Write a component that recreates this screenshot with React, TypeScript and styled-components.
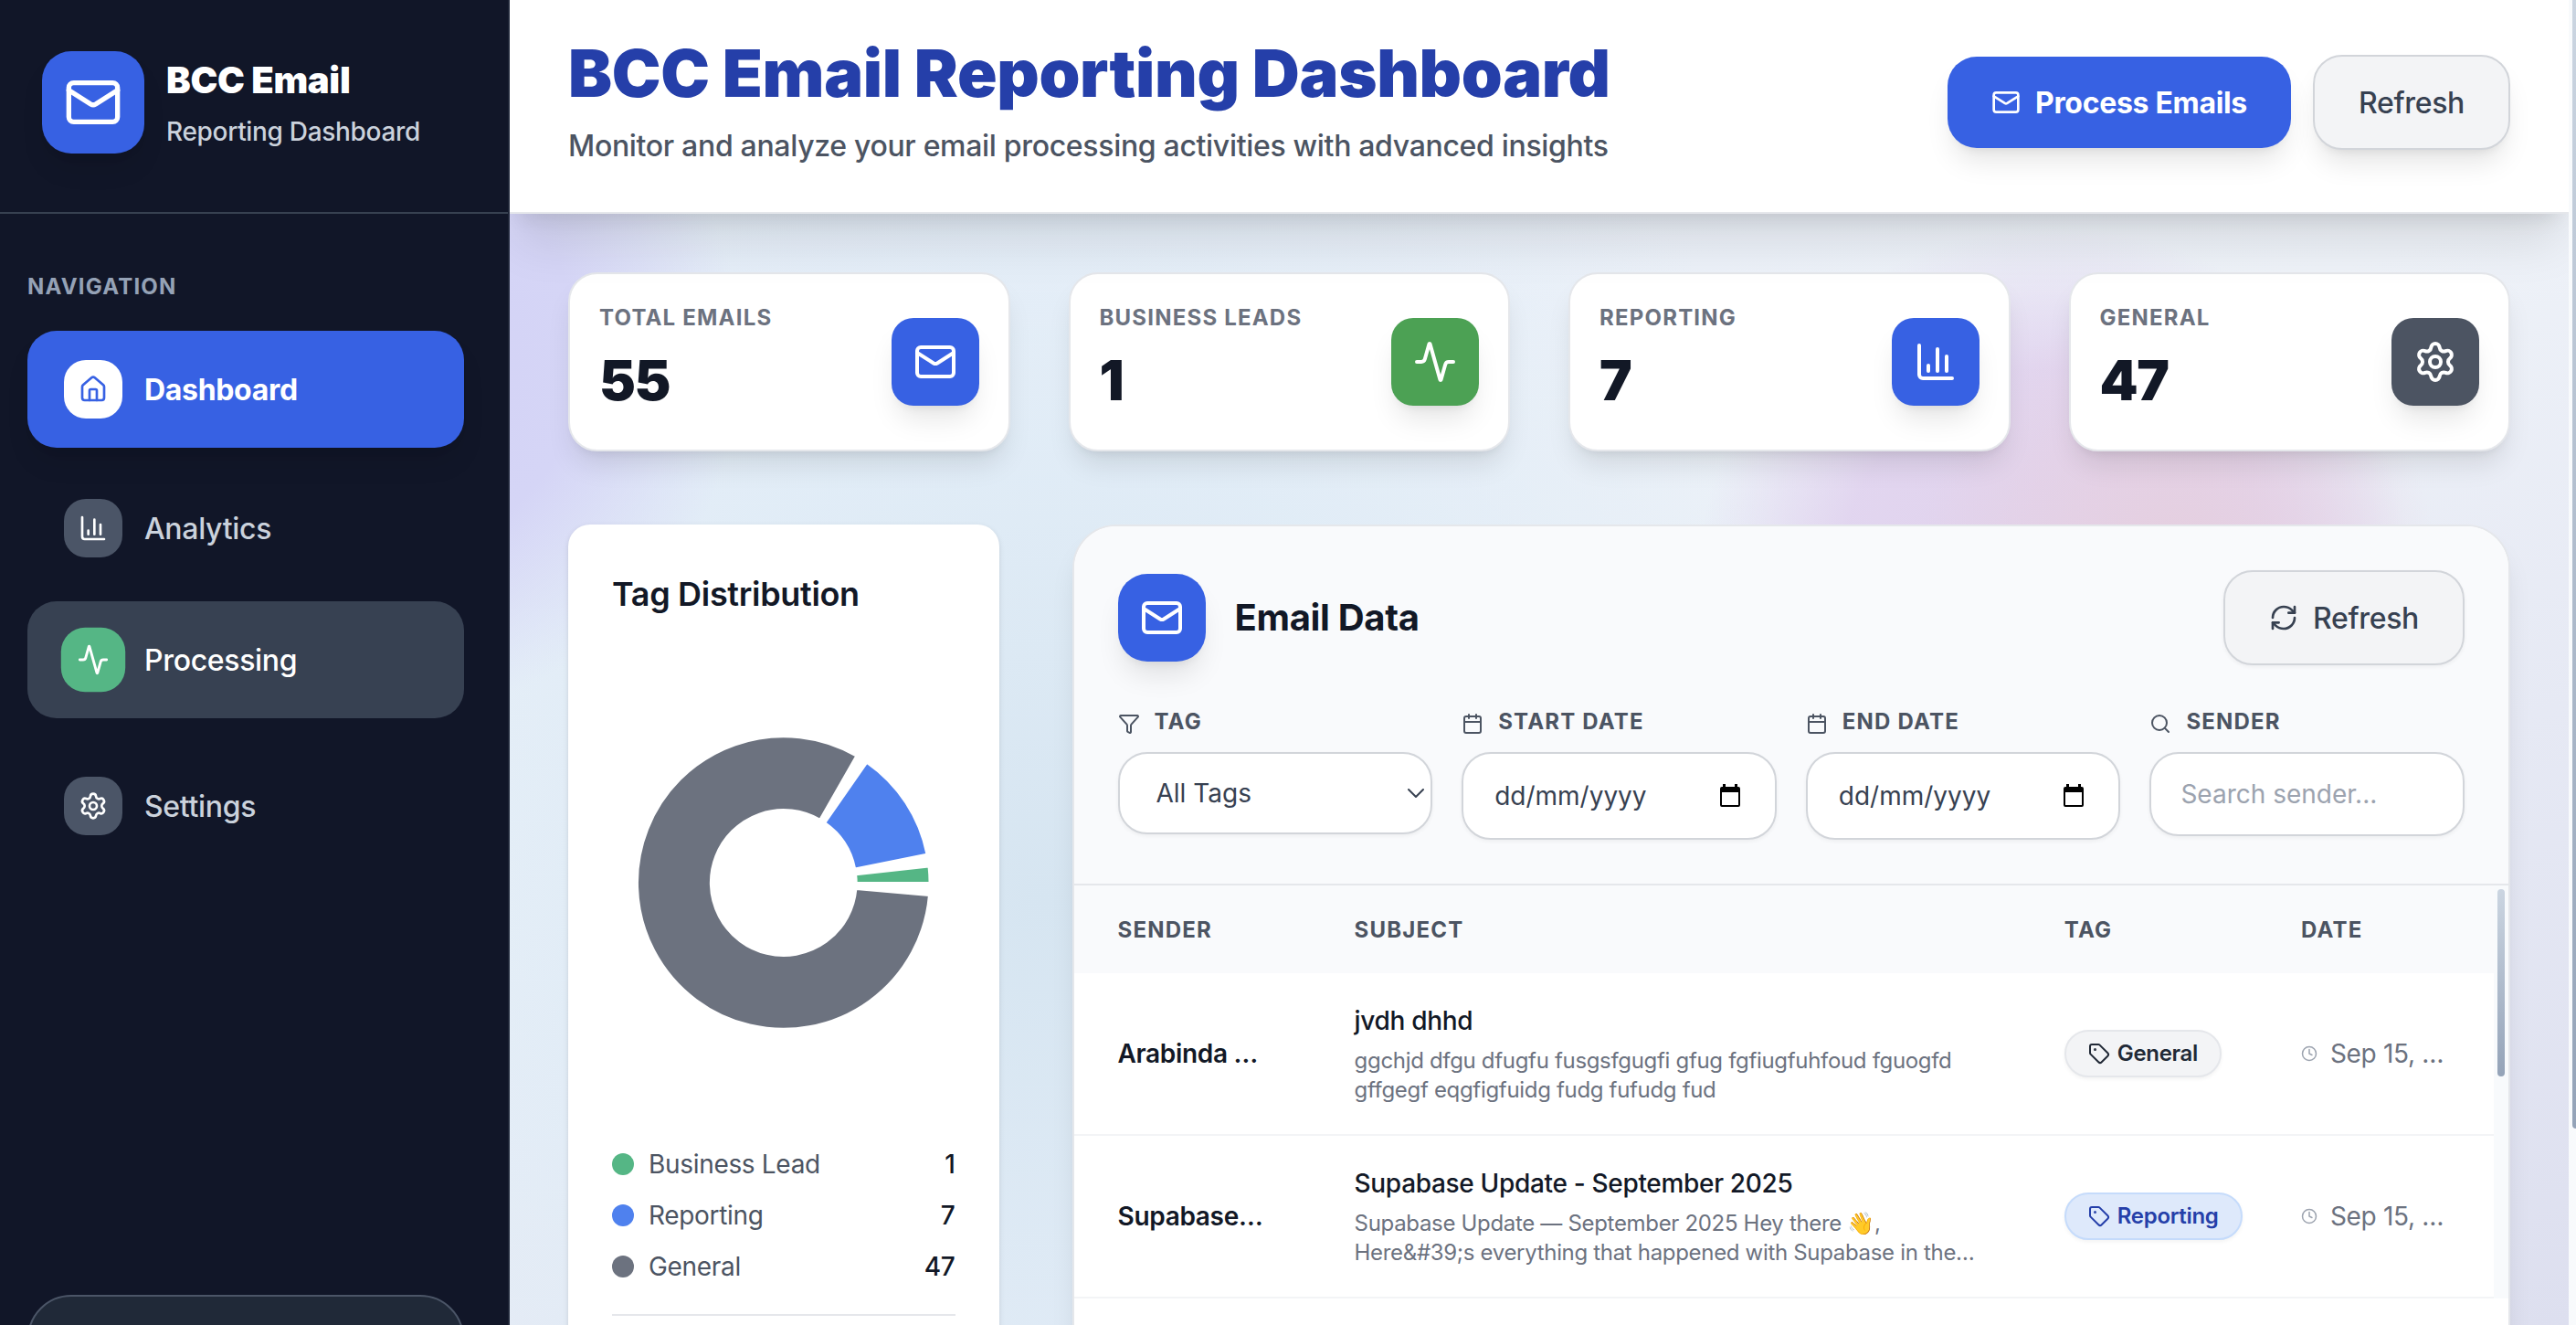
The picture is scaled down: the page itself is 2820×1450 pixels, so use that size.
import React from "react";
import styled, { createGlobalStyle, css } from "styled-components";
import {
  Activity,
  Calendar,
  ChartColumn,
  ChevronDown,
  Clock,
  Funnel,
  House,
  Mail,
  RefreshCw,
  Search,
  Settings,
  Tag,
} from "lucide-react";

const c = {
  blue: "#3761e3",
  title: "#253fa9",
  ink: "#121826",
  body: "#4c5462",
  muted: "#6c727f",
  slate: "#374151",
  line: "#e5e7eb",
  control: "#d2d5da",
  panel: "#f9fafc",
  night: "#111628",
  green: "#4ca154",
  mint: "#55b685",
  sky: "#4f81ee",
};

const GlobalStyle = createGlobalStyle`
  *, *::before, *::after { box-sizing: border-box; }
  html, body { margin: 0; padding: 0; height: 100%; overflow: hidden; }
  body {
    font-family: Inter, "Liberation Sans", sans-serif;
    font-size: 32px;
    letter-spacing: -0.01em;
    color: ${c.ink};
  }
  h1, h2, p, ul, dl, dd { margin: 0; padding: 0; }
  ul { list-style: none; }
  button, input, select {
    font: inherit;
    color: inherit;
    margin: 0;
  }
  button { letter-spacing: inherit; }
  svg { flex-shrink: 0; display: block; }
`;

const softShadow = "0 20px 30px -6px rgba(0,0,0,.1), 0 8px 12px -8px rgba(0,0,0,.1)";
const faintShadow = "0 2px 4px rgba(0,0,0,.05)";

const Shell = styled.div`
  display: grid;
  grid-template-columns: 558px minmax(0, 1fr) 8px;
  height: 100vh;
  overflow: hidden;
  font-size: 28px;
`;

/* Sidebar */

const Sidebar = styled.aside`
  display: flex;
  flex-direction: column;
  height: 100vh;
  overflow: hidden;
  background: ${c.night};
  border-right: 2px solid #1f2638;
`;

const Brand = styled.div`
  display: flex;
  align-items: center;
  gap: 24px;
  padding: 56px 46px 64px;
  border-bottom: 2px solid #374151;
`;

const Tile = styled.span<{ $size: number; $radius: number; $color: string; $shadow?: boolean }>`
  display: flex;
  flex: none;
  align-items: center;
  justify-content: center;
  width: ${(p) => p.$size}px;
  height: ${(p) => p.$size}px;
  border-radius: ${(p) => p.$radius}px;
  background: ${(p) => p.$color};
  color: #fff;
  box-shadow: ${(p) => (p.$shadow ? softShadow : "none")};
`;

const BrandName = styled.p`
  font-size: 40px;
  line-height: 56px;
  font-weight: 900;
  color: #fff;
`;

const BrandSub = styled.p`
  margin-top: 8px;
  font-size: 28px;
  line-height: 40px;
  font-weight: 500;
  color: #cbd2dc;
`;

const Nav = styled.nav`
  flex: 1;
  padding: 64px 48px 0 30px;
`;

const NavTitle = styled.p`
  font-size: 24px;
  line-height: 32px;
  font-weight: 700;
  letter-spacing: 0.05em;
  color: #95a2b6;
`;

const NavList = styled.ul`
  display: grid;
  gap: 24px;
  margin-top: 32px;
`;

const NavIcon = styled.span`
  display: flex;
  align-items: center;
  justify-content: center;
  width: 64px;
  height: 64px;
  border-radius: 24px;
  background: #4b5567;
  color: #fff;
`;

const NavLink = styled.a<{ $state?: "active" | "hover" }>`
  display: flex;
  align-items: center;
  gap: 24px;
  height: 128px;
  padding: 0 40px;
  border-radius: 32px;
  font-size: 32px;
  font-weight: 500;
  color: #cbd2dc;
  text-decoration: none;
  ${(p) =>
    p.$state === "active" &&
    css`
      background: ${c.blue};
      color: #fff;
      font-weight: 700;
      box-shadow: ${softShadow};
      ${NavIcon} {
        background: #fff;
        color: ${c.blue};
      }
    `}
  ${(p) =>
    p.$state === "hover" &&
    css`
      background: #374152;
      color: #fff;
      transform: translateY(-8px);
      ${NavIcon} {
        background: ${c.mint};
        transform: scale(1.1);
      }
    `}
`;

const SidebarFoot = styled.div`
  flex: 0 0 33px;
  min-height: 0;
  padding: 0 48px 0 30px;
`;

const FootCard = styled.div`
  height: 160px;
  border: 2px solid #4b5567;
  border-radius: 48px;
  background: #202938;
`;

/* Main column */

const Main = styled.main`
  min-width: 0;
  height: 100vh;
  overflow: hidden;
  background:
    radial-gradient(circle 390px at -6% 27%, #d3d2f6 0, #d5d5f6 55%, rgba(216, 217, 247, 0) 100%),
    radial-gradient(circle 280px at 81% 42%, #e5cfdf 0, rgba(229, 208, 226, 0.7) 45%, rgba(229, 210, 232, 0) 100%),
    radial-gradient(circle 390px at 75% 44%, #e1d2ec 0, rgba(225, 212, 239, 0.95) 60%, rgba(226, 217, 243, 0) 100%),
    radial-gradient(circle 1000px at 26% 68%, #d6e5f1 0, rgba(222, 235, 246, 0.8) 50%, rgba(226, 237, 246, 0) 100%),
    linear-gradient(160deg, #e6eefa 0%, #eef2f8 45%, #e6e9f4 70%, #dddfef 100%);
`;

const Header = styled.header`
  position: relative;
  display: flex;
  align-items: center;
  justify-content: space-between;
  padding: 40px 64px 48px;
  background: #fff;
  border-bottom: 2px solid ${c.line};
  box-shadow: 0 40px 50px -10px rgba(0, 0, 0, 0.1), 0 16px 20px -12px rgba(0, 0, 0, 0.1);
`;

const PageTitle = styled.h1`
  font-size: 72px;
  line-height: 80px;
  font-weight: 900;
  color: ${c.title};
`;

const PageSub = styled.p`
  margin-top: 16px;
  font-size: 32px;
  line-height: 48px;
  font-weight: 500;
  color: ${c.body};
`;

const Actions = styled.div`
  display: flex;
  align-items: center;
  gap: 24px;
`;

const Button = styled.button<{ $primary?: boolean; $flat?: boolean }>`
  display: flex;
  align-items: center;
  gap: 16px;
  height: ${(p) => (p.$primary ? 100 : 104)}px;
  padding: 0 48px;
  border: ${(p) => (p.$primary ? "0" : `2px solid ${c.control}`)};
  border-radius: 32px;
  background: ${(p) => (p.$primary ? c.blue : "#f3f4f6")};
  color: ${(p) => (p.$primary ? "#fff" : c.slate)};
  font-size: 32px;
  font-weight: ${(p) => (p.$primary ? 700 : 500)};
  box-shadow: ${(p) => (p.$flat ? faintShadow : softShadow)};
`;

const Content = styled.div`
  display: grid;
  gap: 80px;
  padding: 64px;
`;

const Stats = styled.section`
  display: grid;
  grid-template-columns: repeat(4, minmax(0, 1fr));
  gap: 64px;
`;

const StatCard = styled.article`
  display: flex;
  align-items: center;
  justify-content: space-between;
  padding: 32px;
  background: #fff;
  border: 2px solid ${c.line};
  border-radius: 32px;
  box-shadow: ${softShadow};
`;

const StatLabel = styled.p`
  font-size: 24px;
  line-height: 32px;
  font-weight: 700;
  letter-spacing: 0.05em;
  color: ${c.muted};
`;

const StatValue = styled.p`
  margin-top: 8px;
  font-size: 60px;
  line-height: 88px;
  font-weight: 900;
  letter-spacing: -0.025em;
`;

const Panels = styled.div`
  display: grid;
  grid-template-columns: repeat(4, minmax(0, 1fr));
  gap: 80px;
`;

/* Tag distribution */

const ChartCard = styled.section`
  min-height: 1000px;
  padding: 48px;
  background: #fff;
  border-radius: 24px;
  box-shadow: 0 2px 6px rgba(0, 0, 0, 0.1), 0 2px 4px -2px rgba(0, 0, 0, 0.1);
`;

const CardTitle = styled.h2`
  font-size: 36px;
  line-height: 56px;
  font-weight: 600;
`;

const Donut = styled.svg`
  width: 100%;
  height: 512px;
  margin: 32px 0;
`;

const Legend = styled.ul`
  display: grid;
  gap: 16px;
  padding-bottom: 32px;
  border-bottom: 2px solid ${c.line};
`;

const LegendRow = styled.li`
  display: flex;
  align-items: center;
  gap: 16px;
  line-height: 40px;
  color: ${c.body};
`;

const Dot = styled.span<{ $color: string }>`
  width: 24px;
  height: 24px;
  border-radius: 50%;
  background: ${(p) => p.$color};
`;

const LegendValue = styled.span`
  margin-left: auto;
  font-weight: 500;
  color: ${c.ink};
`;

/* Email data */

const EmailCard = styled.section`
  grid-column: span 3;
  overflow: hidden;
  background: #fff;
  border: 2px solid ${c.line};
  border-radius: 48px;
  box-shadow: ${softShadow};
`;

const EmailHead = styled.div`
  padding: 48px;
  background: ${c.panel};
  border-bottom: 2px solid ${c.line};
`;

const EmailBar = styled.div`
  display: flex;
  align-items: center;
  justify-content: space-between;
`;

const EmailTitle = styled.div`
  display: flex;
  align-items: center;
  gap: 32px;
  h2 {
    font-size: 40px;
    line-height: 56px;
    font-weight: 700;
  }
`;

const Filters = styled.form`
  display: grid;
  grid-template-columns: repeat(4, minmax(0, 1fr));
  align-items: start;
  gap: 32px;
  margin-top: 48px;
`;

const Label = styled.label`
  display: flex;
  align-items: flex-end;
  gap: 16px;
  margin-bottom: 19px;
  font-size: 24px;
  line-height: 28px;
  font-weight: 700;
  letter-spacing: 0.05em;
  color: ${c.body};
`;

const Control = styled.div<{ $height: number }>`
  display: flex;
  align-items: center;
  position: relative;
  height: ${(p) => p.$height}px;
  overflow: hidden;
  background: #fff;
  border: 2px solid ${c.control};
  border-radius: 32px;
  box-shadow: ${faintShadow};
  color: ${c.slate};
`;

const field = css`
  width: 100%;
  min-width: 0;
  height: 100%;
  border: 0;
  outline: 0;
  background: transparent;
  font-size: 28px;
`;

const Select = styled.select`
  ${field}
  appearance: none;
  padding: 0 40px;
`;

const SelectArrow = styled(ChevronDown)`
  position: absolute;
  right: 0;
  pointer-events: none;
`;

const TextInput = styled.input`
  ${field}
  padding: 0 32px;
  &::placeholder {
    color: #9ca3af;
    opacity: 1;
  }
`;

const DateInput = styled(TextInput)`
  padding: 0 0 0 34px;
  &::placeholder {
    color: ${c.slate};
  }
`;

const PickerButton = styled.button`
  flex: none;
  padding: 0;
  margin-right: 38px;
  border: 0;
  background: none;
  color: #000;
`;

const TableArea = styled.div`
  display: grid;
  grid-template-columns: minmax(0, 1fr) 16px;
`;

const Table = styled.table`
  width: 100%;
  table-layout: fixed;
  border-collapse: separate;
  border-spacing: 0;
  text-align: left;
`;

const Th = styled.th<{ $wide?: boolean }>`
  width: ${(p) => (p.$wide ? "50%" : "auto")};
  height: 96px;
  padding: 0 48px;
  background: ${c.panel};
  font-size: 24px;
  font-weight: 700;
  letter-spacing: 0.05em;
  color: ${c.body};
`;

const Td = styled.td`
  height: 178px;
  padding: 32px 48px;
  border-bottom: 2px solid #f3f4f6;
  vertical-align: middle;
  white-space: nowrap;
`;

const Sender = styled.p`
  font-weight: 600;
  line-height: 40px;
`;

const Subject = styled.p`
  font-weight: 500;
  line-height: 40px;
`;

const Preview = styled.p`
  margin-top: 8px;
  font-size: 24px;
  line-height: 32px;
  color: ${c.muted};
  white-space: pre;
`;

const Badge = styled.span<{ $tone: "gray" | "blue" }>`
  display: inline-flex;
  align-items: center;
  gap: 8px;
  padding: 8px 24px;
  border: 2px solid ${(p) => (p.$tone === "blue" ? "#c5dbfb" : c.line)};
  border-radius: 26px;
  background: ${(p) => (p.$tone === "blue" ? "#dee9fb" : "#f3f4f6")};
  color: ${(p) => (p.$tone === "blue" ? c.title : "#212936")};
  font-size: 24px;
  line-height: 32px;
  font-weight: 600;
  vertical-align: middle;
  box-shadow: ${faintShadow};
`;

const When = styled.span`
  display: flex;
  align-items: center;
  gap: 14px;
  color: ${c.muted};
  svg {
    color: #9ca3af;
  }
`;

const Track = styled.div`
  padding: 4px;
  background: #f8fafc;
`;

const Thumb = styled.div`
  width: 8px;
  height: 205px;
  border-radius: 4px;
  background: linear-gradient(#cbd5e1, #94a3b8);
`;

const PageTrack = styled.div`
  padding-left: 4px;
  overflow: hidden;
  background: #f8fafc;
`;

const PageThumb = styled.div`
  width: 8px;
  height: 85.2%;
  border-radius: 0 0 4px 4px;
  background: linear-gradient(#cbd5e1, #94a3b8);
`;

const navItems = [
  { label: "Dashboard", Icon: House, state: "active" as const },
  { label: "Analytics", Icon: ChartColumn },
  { label: "Processing", Icon: Activity, state: "hover" as const },
  { label: "Settings", Icon: Settings },
];

const stats = [
  { label: "TOTAL EMAILS", value: 55, Icon: Mail, color: c.blue },
  { label: "BUSINESS LEADS", value: 1, Icon: Activity, color: c.green },
  { label: "REPORTING", value: 7, Icon: ChartColumn, color: c.blue },
  { label: "GENERAL", value: 47, Icon: Settings, color: c.body },
];

const tags = [
  { name: "Business Lead", value: 1, color: c.mint },
  { name: "Reporting", value: 7, color: c.sky },
  { name: "General", value: 47, color: c.muted },
];

const emails = [
  {
    sender: "Arabinda …",
    subject: "jvdh dhhd",
    preview: "ggchjd dfgu dfugfu fusgsfgugfi gfug fgfiugfuhfoud fguogfd\ngffgegf eqgfigfuidg fudg fufudg fud",
    tag: "General",
    tone: "gray" as const,
    date: "Sep 15, …",
  },
  {
    sender: "Supabase…",
    subject: "Supabase Update - September 2025",
    preview: "Supabase Update — September 2025 Hey there 👋,\nHere&#39;s everything that happened with Supabase in the…",
    tag: "Reporting",
    tone: "blue" as const,
    date: "Sep 15, …",
  },
];

/* Ring sector between two angles, counter-clockwise from three o'clock. */
function sector(from: number, to: number, inner: number, outer: number) {
  const pt = (r: number, deg: number) => {
    const a = (-deg * Math.PI) / 180;
    return `${(r * Math.cos(a)).toFixed(2)} ${(r * Math.sin(a)).toFixed(2)}`;
  };
  const large = to - from > 180 ? 1 : 0;
  return `M${pt(outer, from)}A${outer} ${outer} 0 ${large} 0 ${pt(outer, to)}L${pt(inner, to)}A${inner} ${inner} 0 ${large} 1 ${pt(inner, from)}Z`;
}

function TagDonut() {
  const total = tags.reduce((sum, t) => sum + t.value, 0);
  const gap = 5;
  const sweep = 360 - gap * tags.length;
  let start = 0;
  return (
    <Donut viewBox="-188 -256 376 512" role="img" aria-label="Tag distribution">
      {tags.map((t) => {
        const end = start + (t.value / total) * sweep;
        const d = sector(start, end, 80, 160);
        start = end + gap;
        return <path key={t.name} d={d} fill={t.color} stroke="#fff" strokeWidth={2} />;
      })}
    </Donut>
  );
}

function PickerIcon() {
  return (
    <svg width="22" height="26" viewBox="0 0 22 26" fill="currentColor">
      <path
        fillRule="evenodd"
        d="M3 0h3v3h10V0h3v3h1a2 2 0 0 1 2 2v18a2 2 0 0 1-2 2H2a2 2 0 0 1-2-2V5a2 2 0 0 1 2-2h1zM2 9v14h18V9z"
      />
    </svg>
  );
}

function DateFilter({ id, label }: { id: string; label: string }) {
  return (
    <div>
      <Label htmlFor={id}>
        <Calendar size={24} />
        {label}
      </Label>
      <Control $height={96}>
        <DateInput id={id} type="text" placeholder="dd/mm/yyyy" />
        <PickerButton type="button" aria-label={`Pick ${label.toLowerCase()}`}>
          <PickerIcon />
        </PickerButton>
      </Control>
    </div>
  );
}

export default function App() {
  return (
    <>
      <GlobalStyle />
      <Shell>
        <Sidebar>
          <Brand>
            <Tile $size={112} $radius={32} $color={c.blue} $shadow>
              <Mail size={64} />
            </Tile>
            <div>
              <BrandName>BCC Email</BrandName>
              <BrandSub>Reporting Dashboard</BrandSub>
            </div>
          </Brand>
          <Nav>
            <NavTitle>NAVIGATION</NavTitle>
            <NavList>
              {navItems.map(({ label, Icon, state }) => (
                <li key={label}>
                  <NavLink href="#" $state={state}>
                    <NavIcon>
                      <Icon size={32} />
                    </NavIcon>
                    {label}
                  </NavLink>
                </li>
              ))}
            </NavList>
          </Nav>
          <SidebarFoot>
            <FootCard />
          </SidebarFoot>
        </Sidebar>

        <Main>
          <Header>
            <div>
              <PageTitle>BCC Email Reporting Dashboard</PageTitle>
              <PageSub>Monitor and analyze your email processing activities with advanced insights</PageSub>
            </div>
            <Actions>
              <Button type="button" $primary>
                <Mail size={32} />
                Process Emails
              </Button>
              <Button type="button">Refresh</Button>
            </Actions>
          </Header>

          <Content>
            <Stats>
              {stats.map(({ label, value, Icon, color }) => (
                <StatCard key={label}>
                  <div>
                    <StatLabel>{label}</StatLabel>
                    <StatValue>{value}</StatValue>
                  </div>
                  <Tile $size={96} $radius={24} $color={color} $shadow>
                    <Icon size={48} />
                  </Tile>
                </StatCard>
              ))}
            </Stats>

            <Panels>
              <ChartCard>
                <CardTitle>Tag Distribution</CardTitle>
                <TagDonut />
                <Legend>
                  {tags.map((t) => (
                    <LegendRow key={t.name}>
                      <Dot $color={t.color} />
                      {t.name}
                      <LegendValue>{t.value}</LegendValue>
                    </LegendRow>
                  ))}
                </Legend>
              </ChartCard>

              <EmailCard>
                <EmailHead>
                  <EmailBar>
                    <EmailTitle>
                      <Tile $size={96} $radius={32} $color={c.blue} $shadow>
                        <Mail size={48} />
                      </Tile>
                      <h2>Email Data</h2>
                    </EmailTitle>
                    <Button type="button" $flat>
                      <RefreshCw size={32} />
                      Refresh
                    </Button>
                  </EmailBar>
                  <Filters>
                    <div>
                      <Label htmlFor="tag">
                        <Funnel size={24} />
                        TAG
                      </Label>
                      <Control $height={90}>
                        <Select id="tag" defaultValue="all">
                          <option value="all">All Tags</option>
                        </Select>
                        <SelectArrow size={32} strokeWidth={1.5} />
                      </Control>
                    </div>
                    <DateFilter id="start" label="START DATE" />
                    <DateFilter id="end" label="END DATE" />
                    <div>
                      <Label htmlFor="sender">
                        <Search size={24} />
                        SENDER
                      </Label>
                      <Control $height={92}>
                        <TextInput id="sender" type="text" placeholder="Search sender..." />
                      </Control>
                    </div>
                  </Filters>
                </EmailHead>
                <TableArea>
                  <Table>
                    <thead>
                      <tr>
                        <Th>SENDER</Th>
                        <Th $wide>SUBJECT</Th>
                        <Th>TAG</Th>
                        <Th>DATE</Th>
                      </tr>
                    </thead>
                    <tbody>
                      {emails.map((m) => (
                        <tr key={m.subject}>
                          <Td>
                            <Sender>{m.sender}</Sender>
                          </Td>
                          <Td>
                            <Subject>{m.subject}</Subject>
                            <Preview>{m.preview}</Preview>
                          </Td>
                          <Td>
                            <Badge $tone={m.tone}>
                              <Tag size={24} />
                              {m.tag}
                            </Badge>
                          </Td>
                          <Td>
                            <When>
                              <Clock size={18} />
                              {m.date}
                            </When>
                          </Td>
                        </tr>
                      ))}
                    </tbody>
                  </Table>
                  <Track>
                    <Thumb />
                  </Track>
                </TableArea>
              </EmailCard>
            </Panels>
          </Content>
        </Main>

        <PageTrack>
          <PageThumb />
        </PageTrack>
      </Shell>
    </>
  );
}
